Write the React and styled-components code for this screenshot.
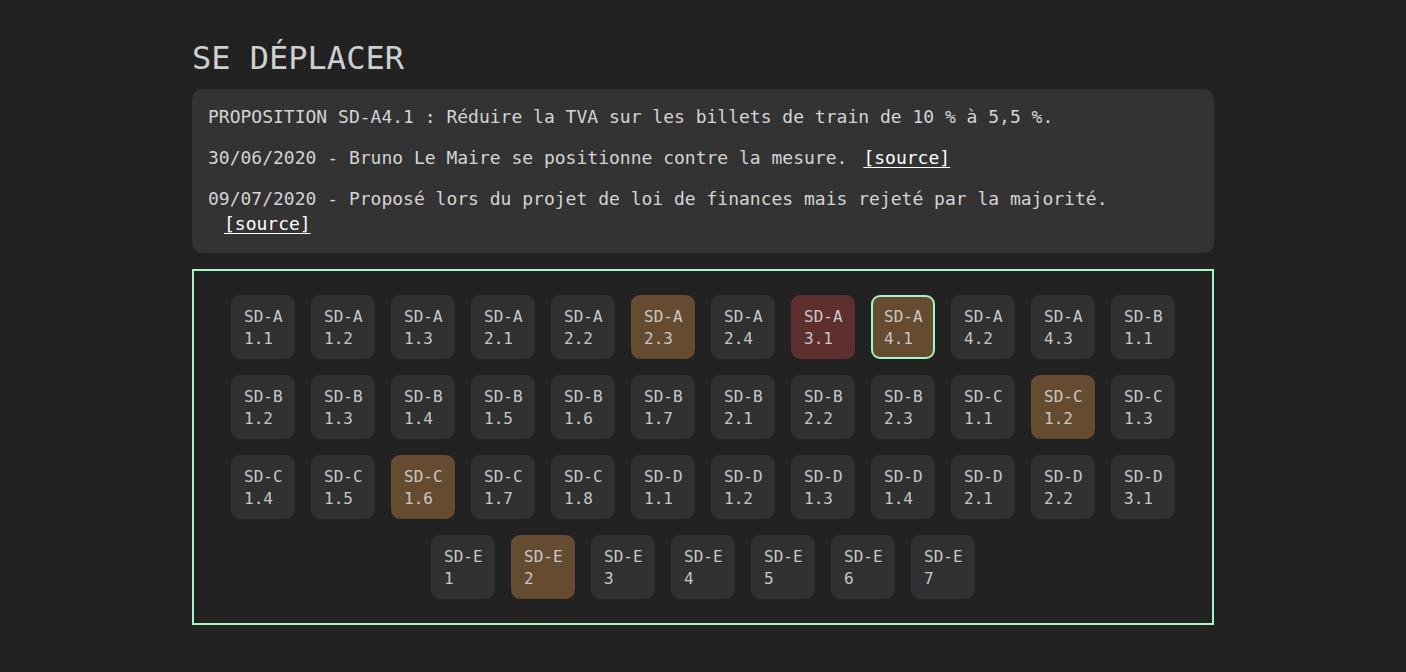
import React from 'react';
import styled, { createGlobalStyle } from 'styled-components';

const GlobalStyle = createGlobalStyle`
    html, body {
        margin: 0;
        padding: 0;
        background: #222222;
    }
    body {
        font-family: 'DejaVu Sans Mono', 'Liberation Mono', monospace;
        color: #cccccc;
    }
`;

const Page = styled.div`
    width: 1022px;
    margin: 0 auto;
    padding-top: 39px;
    padding-bottom: 40px;
`;

const Title = styled.h1`
    margin: 0 0 12px;
    font-size: 32px;
    line-height: 38px;
    font-weight: 400;
    color: #cfcfcf;
`;

const InfoBox = styled.div`
    background: #333333;
    border-radius: 10px;
    padding: 15px 16px 17px;
    font-size: 18px;
    line-height: 25px;
    color: #d4d4d4;
    p {
        margin: 0 0 16px;
    }
    p:last-child {
        margin-bottom: 0;
    }
`;

const Source = styled.a`
    display: inline-block;
    margin-left: 16px;
    color: #ffffff;
    text-decoration: underline;
    text-underline-offset: 3px;
`;

const Grid = styled.div`
    margin-top: 16px;
    border: 2px solid #a6f4c5;
    padding: 24px 24px;
    display: flex;
    flex-wrap: wrap;
    justify-content: center;
    gap: 16px;
`;

const tones = {
    plain: '#313131',
    brown: '#654b30',
    red: '#5e2f2f',
};

const Tile = styled.div`
    box-sizing: border-box;
    width: 64px;
    height: 64px;
    border-radius: 9px;
    background: ${(p) => tones[p.tone]};
    border: ${(p) => (p.selected ? '2px solid #a6f4c5' : 'none')};
    padding: ${(p) => (p.selected ? '9px 11px 0' : '11px 13px 0')};
    font-size: 16px;
    line-height: 22px;
    color: #c8c8c8;
    text-align: left;
    white-space: nowrap;
    cursor: pointer;
`;

const tiles = [
    'A 1.1', 'A 1.2', 'A 1.3', 'A 2.1', 'A 2.2', 'A 2.3', 'A 2.4', 'A 3.1', 'A 4.1', 'A 4.2', 'A 4.3', 'B 1.1',
    'B 1.2', 'B 1.3', 'B 1.4', 'B 1.5', 'B 1.6', 'B 1.7', 'B 2.1', 'B 2.2', 'B 2.3', 'C 1.1', 'C 1.2', 'C 1.3',
    'C 1.4', 'C 1.5', 'C 1.6', 'C 1.7', 'C 1.8', 'D 1.1', 'D 1.2', 'D 1.3', 'D 1.4', 'D 2.1', 'D 2.2', 'D 3.1',
    'E 1', 'E 2', 'E 3', 'E 4', 'E 5', 'E 6', 'E 7',
];

const brown = ['A 2.3', 'A 4.1', 'C 1.2', 'C 1.6', 'E 2'];
const red = ['A 3.1'];

const App = () => {
    return (
        <>
            <GlobalStyle />
            <Page>
                <Title>SE DÉPLACER</Title>
                <InfoBox>
                    <p>PROPOSITION SD-A4.1 : Réduire la TVA sur les billets de train de 10 % à 5,5 %.</p>
                    <p>
                        30/06/2020 - Bruno Le Maire se positionne contre la mesure.
                        <Source href="#">[source]</Source>
                    </p>
                    <p>
                        09/07/2020 - Proposé lors du projet de loi de finances mais rejeté par la majorité.
                        <Source href="#">[source]</Source>
                    </p>
                </InfoBox>
                <Grid>
                    {tiles.map((t) => {
                        const [letter, num] = t.split(' ');
                        const tone = brown.includes(t) ? 'brown' : red.includes(t) ? 'red' : 'plain';
                        return (
                            <Tile key={t} tone={tone} selected={t === 'A 4.1'}>
                                SD-{letter}
                                <br />
                                {num}
                            </Tile>
                        );
                    })}
                </Grid>
            </Page>
        </>
    );
};

export default App;
